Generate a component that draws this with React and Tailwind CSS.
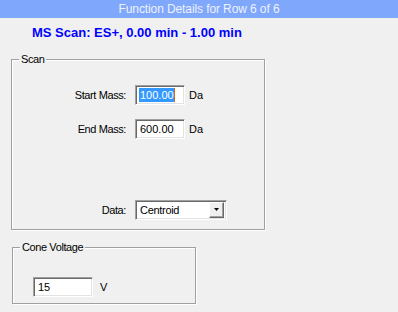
import React from 'react';

const GroupBox = ({ title, className, children }) => (
  <div className={`relative border border-[#a0a0a0] shadow-[inset_1px_1px_0_#fff,1px_1px_0_#fff] ${className}`}>
    <span className="absolute top-[-7px] left-[7px] px-[2px] bg-[#f0f0f0] text-[11px] leading-[13px] tracking-[-0.4px]">
      {title}
    </span>
    {children}
  </div>
);

const TextBox = ({ width, children }) => (
  <div
    className={`${width} h-[20px] bg-white border border-t-[#a0a0a0] border-l-[#a0a0a0] border-b-white border-r-white shadow-[inset_1px_1px_0_#696969,inset_-1px_-1px_0_#e3e3e3] flex items-center pl-[3px] text-[11px]`}
  >
    {children}
  </div>
);

const Row = ({ label, children, className = '' }) => (
  <div className={`flex items-center h-[20px] ${className}`}>
    <span className="w-[114px] text-right text-[11px] tracking-[-0.4px]">{label}</span>
    <div className="ml-[9px] flex items-center">{children}</div>
  </div>
);

export default function App() {
  return (
    <div className="w-[398px] h-[312px] bg-[#f0f0f0] text-black overflow-hidden font-['Liberation_Sans',Arial,sans-serif]">
      {/* title bar */}
      <div className="h-[18px] bg-[#7fa7fb] flex items-center justify-center text-[12px] leading-none text-[#eef2fb] tracking-[-0.1px]">
        Function Details for Row 6 of 6
      </div>

      <div className="mt-[7px] pl-[32px] h-[16px] leading-[16px] text-[13px] font-bold text-[#0000ff]">
        MS Scan: ES+, 0.00 min - 1.00 min
      </div>

      {/* Scan group */}
      <GroupBox title="Scan" className="ml-[11px] mt-[18px] w-[254px] h-[171px]">
        <div className="pt-[25px] flex flex-col">
          <Row label="Start Mass:">
            <TextBox width="w-[50px]">
              <span className="h-[14px] leading-[14px] bg-[#3399ff] text-white pl-[1px]">100.00</span>
              <span className="w-[1px] h-[14px] bg-[#d06a1e]" />
            </TextBox>
            <span className="ml-[4px] text-[11px]">Da</span>
          </Row>
          <Row label="End Mass:" className="mt-[14px]">
            <TextBox width="w-[50px]">
              <span className="pl-[1px]">600.00</span>
            </TextBox>
            <span className="ml-[4px] text-[11px]">Da</span>
          </Row>
          <Row label="Data:" className="mt-[61px]">
            <div className="w-[92px] h-[20px] bg-white border border-t-[#a0a0a0] border-l-[#a0a0a0] border-b-white border-r-white shadow-[inset_1px_1px_0_#696969,inset_-1px_-1px_0_#e3e3e3] flex items-center pl-[4px] pr-[2px] text-[11px]">
              <span className="flex-1 tracking-[-0.3px]">Centroid</span>
              <div className="w-[15px] h-[16px] bg-[#f0f0f0] border border-t-white border-l-white border-b-[#696969] border-r-[#696969] shadow-[inset_-1px_-1px_0_#a0a0a0] flex items-center justify-center">
                <svg width="7" height="4" viewBox="0 0 7 4">
                  <polygon points="1,0 6,0 3.5,3" fill="#000" />
                </svg>
              </div>
            </div>
          </Row>
        </div>
      </GroupBox>

      {/* Cone Voltage group */}
      <GroupBox title="Cone Voltage" className="ml-[12px] mt-[17px] w-[184px] h-[57px]">
        <div className="pt-[29px] pl-[20px] flex items-center">
          <TextBox width="w-[60px]">
            <span className="pl-[1px]">15</span>
          </TextBox>
          <span className="ml-[7px] text-[11px]">V</span>
        </div>
      </GroupBox>
    </div>
  );
}
